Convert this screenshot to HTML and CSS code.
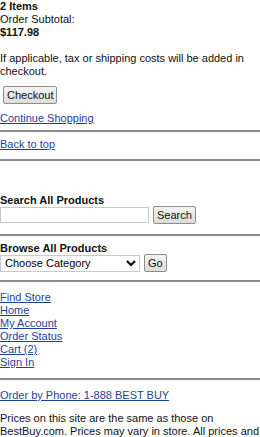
FILE: index.html
```html
<!DOCTYPE html>
<html lang="en">
<head>
    <meta charset="UTF-8">
    <meta name="viewport" content="width=device-width, initial-scale=1.0">
    <title>Cart</title>
    <link rel="stylesheet" href="styles.css">
</head>
<body>
    <div class="summary">
        <div class="bold">2 Items</div>
        <div>Order Subtotal:</div>
        <div class="bold">$117.98</div>
        <p class="note">If applicable, tax or shipping costs will be added in checkout.</p>
        <button class="btn checkout">Checkout</button>
        <p class="continue"><a href="#">Continue Shopping</a></p>
    </div>
    <hr>
    <p class="top-link"><a href="#">Back to top</a></p>
    <hr>

    <div class="search">
        <div class="bold">Search All Products</div>
        <div class="row">
            <input type="text" class="search-input">
            <button class="btn">Search</button>
        </div>
    </div>
    <hr>
    <div class="browse">
        <div class="bold">Browse All Products</div>
        <div class="row">
            <select class="category">
                <option>Choose Category</option>
            </select>
            <button class="btn">Go</button>
        </div>
    </div>
    <hr>
    <ul class="nav">
        <li><a href="#">Find Store</a></li>
        <li><a href="#">Home</a></li>
        <li><a href="#">My Account</a></li>
        <li><a href="#">Order Status</a></li>
        <li><a href="#">Cart (2)</a></li>
        <li><a href="#">Sign In</a></li>
    </ul>
    <hr class="foot-rule">
    <p class="phone"><a href="#">Order by Phone: 1-888 BEST BUY</a></p>
    <p class="legal">Prices on this site are the same as those on BestBuy.com. Prices may vary in store. All prices and</p>
</body>
</html>
```

FILE: styles.css
```css
*{
    box-sizing: border-box;
}
body{
    margin: 0;
    font-family: "Liberation Sans", Arial, sans-serif;
    font-size: 11px;
    line-height: 13px;
    color: #111;
    background: #fff;
    width: 260px;
}
p{
    margin: 0;
}
a{
    color: #1f3f99;
}
.bold{
    font-weight: bold;
}
.note{
    margin-top: 13px;
}
.btn{
    font-family: "Liberation Sans", Arial, sans-serif;
    font-size: 11px;
    color: #111;
    padding: 1px 3px;
    height: 18px;
    line-height: 14px;
    border: 1px solid #8d8d8d;
    border-radius: 2px;
    background: linear-gradient(#f4f4f4, #dcdcdc);
}
.checkout{
    margin: 8px 0 0 3px;
}
.continue{
    margin-top: 8px;
}
hr{
    border: 0;
    border-top: 2px solid #8c8c8c;
    margin: 5px 0 6px;
    height: 0;
}
.top-link{
    padding-bottom: 3px;
}
.search{
    margin-top: 33px;
}
.row{
    display: flex;
    align-items: center;
    gap: 4px;
    margin-top: -1px;
}
.search-input{
    width: 149px;
    height: 16px;
    border: 1px solid #c9c9c9;
    padding: 0 2px;
}
.category{
    width: 140px;
    height: 17px;
    font-family: "Liberation Sans", Arial, sans-serif;
    font-size: 11px;
    border: 1px solid #c9c9c9;
    background: #fff;
    padding: 0;
}
.search + hr{
    margin-top: 10px;
}
.browse + hr{
    margin-top: 8px;
    margin-bottom: 9px;
}
.nav{
    list-style: none;
    margin: 0;
    padding: 0;
}
.foot-rule{
    margin: 9px 0 9px;
}
.legal{
    margin-top: 10px;
}
```
